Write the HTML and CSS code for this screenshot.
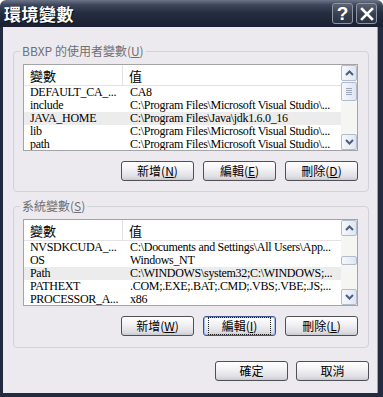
FILE: index.html
```html
<!DOCTYPE html>
<html lang="zh-Hant">
<head>
  <meta charset="UTF-8">
  <meta name="viewport" content="width=device-width, initial-scale=1.0">
  <title>環境變數</title>
  <link rel="stylesheet" href="styles.css">
</head>
<body>
  <div class="window">
    <!-- Title Bar -->
    <div class="titlebar">
      <span class="title">環境變數</span>
      <div class="caption-buttons">
        <span class="cap-btn help">?</span>
        <span class="cap-btn close">
          <svg width="14" height="14" viewBox="0 0 14 14">
            <path d="M2 2 L12 12 M12 2 L2 12" stroke="#fff" stroke-width="2.6" stroke-linecap="square"/>
          </svg>
        </span>
      </div>
    </div>

    <div class="client">
      <!-- User Variables -->
      <fieldset class="group">
        <legend>BBXP 的使用者變數(<u>U</u>)</legend>
        <div class="listview">
          <div class="lv-body">
            <div class="lv-head"><span class="col-name">變數</span><span class="col-value">值</span></div>
            <div class="lv-row"><span class="col-name">DEFAULT_CA_...</span><span class="col-value">CA8</span></div>
            <div class="lv-row"><span class="col-name">include</span><span class="col-value">C:\Program Files\Microsoft Visual Studio\...</span></div>
            <div class="lv-row selected"><span class="col-name">JAVA_HOME</span><span class="col-value">C:\Program Files\Java\jdk1.6.0_16</span></div>
            <div class="lv-row"><span class="col-name">lib</span><span class="col-value">C:\Program Files\Microsoft Visual Studio\...</span></div>
            <div class="lv-row"><span class="col-name">path</span><span class="col-value">C:\Program Files\Microsoft Visual Studio\...</span></div>
          </div>
          <div class="scrollbar">
            <span class="sb-btn">
              <svg width="9" height="6" viewBox="0 0 9 6"><path d="M1 5 L4.5 1.5 L8 5" fill="none" stroke="#4d5d7f" stroke-width="2"/></svg>
            </span>
            <div class="sb-track">
              <span class="sb-thumb" style="margin-top:1px;height:19px"><i></i><i></i><i></i><i></i></span>
            </div>
            <span class="sb-btn">
              <svg width="9" height="6" viewBox="0 0 9 6"><path d="M1 1 L4.5 4.5 L8 1" fill="none" stroke="#4d5d7f" stroke-width="2"/></svg>
            </span>
          </div>
        </div>
        <div class="buttons">
          <button class="btn">新增(<u>N</u>)</button>
          <button class="btn">編輯(<u>E</u>)</button>
          <button class="btn">刪除(<u>D</u>)</button>
        </div>
      </fieldset>

      <!-- System Variables -->
      <fieldset class="group system">
        <legend>系統變數(<u>S</u>)</legend>
        <div class="listview">
          <div class="lv-body">
            <div class="lv-head"><span class="col-name">變數</span><span class="col-value">值</span></div>
            <div class="lv-row"><span class="col-name">NVSDKCUDA_...</span><span class="col-value">C:\Documents and Settings\All Users\App...</span></div>
            <div class="lv-row"><span class="col-name">OS</span><span class="col-value">Windows_NT</span></div>
            <div class="lv-row selected"><span class="col-name">Path</span><span class="col-value">C:\WINDOWS\system32;C:\WINDOWS;...</span></div>
            <div class="lv-row"><span class="col-name">PATHEXT</span><span class="col-value">.COM;.EXE;.BAT;.CMD;.VBS;.VBE;.JS;...</span></div>
            <div class="lv-row"><span class="col-name">PROCESSOR_A...</span><span class="col-value">x86</span></div>
          </div>
          <div class="scrollbar">
            <span class="sb-btn">
              <svg width="9" height="6" viewBox="0 0 9 6"><path d="M1 5 L4.5 1.5 L8 5" fill="none" stroke="#4d5d7f" stroke-width="2"/></svg>
            </span>
            <div class="sb-track">
              <span class="sb-thumb" style="margin-top:20px;height:9px"></span>
            </div>
            <span class="sb-btn">
              <svg width="9" height="6" viewBox="0 0 9 6"><path d="M1 1 L4.5 4.5 L8 1" fill="none" stroke="#4d5d7f" stroke-width="2"/></svg>
            </span>
          </div>
        </div>
        <div class="buttons">
          <button class="btn">新增(<u>W</u>)</button>
          <button class="btn focused"><span class="focus-rect">編輯(<u>I</u>)</span></button>
          <button class="btn">刪除(<u>L</u>)</button>
        </div>
      </fieldset>

      <!-- Dialog Buttons -->
      <div class="dialog-buttons">
        <button class="btn">確定</button>
        <button class="btn">取消</button>
      </div>
    </div>
  </div>
</body>
</html>
```

FILE: styles.css
```css
/* General */
body {
  margin: 0;
  padding: 0;
  background: #fff;
  font-family: "Noto Sans CJK TC", "Liberation Sans", sans-serif;
}

.window {
  width: 383px;
  height: 397px;
  display: flex;
  flex-direction: column;
  box-sizing: border-box;
}

/* Title Bar */
.titlebar {
  height: 27px;
  flex: none;
  display: flex;
  align-items: center;
  justify-content: space-between;
  padding: 0 6px 0 4px;
  border-radius: 6px 6px 0 0;
  background: linear-gradient(#6c7588 0, #3c465b 5px, #252d40 13px, #1a2031 27px);
}

.title {
  color: #fff;
  font-size: 17px;
  font-weight: bold;
  line-height: 20px;
  letter-spacing: 0.5px;
  text-shadow: 1px 1px 0 #0b0f18;
}

.caption-buttons {
  display: flex;
  gap: 3px;
}

.cap-btn {
  width: 19px;
  height: 19px;
  display: flex;
  align-items: center;
  justify-content: center;
  border: 1px solid #8e95a3;
  border-radius: 3px;
  background: linear-gradient(#5b6373, #3a4152 50%, #2c3242);
  color: #fff;
  font-family: "Liberation Sans", sans-serif;
  font-weight: bold;
  font-size: 19px;
  line-height: 1;
}

/* Dialog body */
.client {
  flex: 1;
  display: flex;
  flex-direction: column;
  background: #eceaef;
  border-left: 3px solid #222b3f;
  border-right: 5px solid #222b3f;
  border-bottom: 4px solid #222b3f;
  box-shadow: inset -1px 0 0 #9aa0ad;
}

/* Group Boxes */
.group {
  margin: 17px 9px 0 10px;
  padding: 6px 10px 10px 9px;
  border: 1px solid #d3d2d8;
  border-radius: 4px;
  min-width: 0;
}

.group.system {
  margin-top: 7px;
  padding-bottom: 11px;
}

.group legend {
  padding: 0 2px;
  margin-left: -3px;
  font-size: 12px;
  line-height: 14px;
  color: #6f6f74;
}

/* List View */
.listview {
  height: 87px;
  box-sizing: border-box;
  display: flex;
  border: 1px solid #a3a3a8;
  background: #fff;
}

.lv-body {
  flex: 1;
  overflow: hidden;
}

.lv-head {
  height: 20px;
  display: flex;
  align-items: center;
  border-bottom: 1px solid #e3e3e6;
  font-size: 13px;
  color: #000;
}

.lv-head .col-name {
  align-self: stretch;
  display: flex;
  align-items: center;
  border-right: 1px solid #e3e3e6;
}

.lv-row {
  height: 13px;
  display: flex;
  font-family: "Liberation Serif", "Noto Sans CJK TC", serif;
  font-size: 12px;
  line-height: 13px;
  letter-spacing: -0.3px;
  color: #000;
  white-space: nowrap;
}

.lv-row.selected {
  background: #ececec;
}

.col-name {
  width: 99px;
  flex: none;
  padding-left: 6px;
  box-sizing: border-box;
  overflow: hidden;
}

.lv-row .col-name {
  width: 100px;
}

.col-value {
  flex: 1;
  padding-left: 6px;
  overflow: hidden;
}

/* Scrollbar */
.scrollbar {
  width: 16px;
  flex: none;
  display: flex;
  flex-direction: column;
  background: #f5f5f3;
}

.sb-btn,
.sb-thumb {
  box-sizing: border-box;
  border: 1px solid #b3bccd;
  border-radius: 2px;
  background: linear-gradient(90deg, #f7f8fc, #dfe5ef);
}

.sb-btn {
  height: 16px;
  display: flex;
  align-items: center;
  justify-content: center;
}

.sb-track {
  flex: 1;
  display: flex;
  flex-direction: column;
}

.sb-thumb {
  display: flex;
  flex-direction: column;
  align-items: center;
  justify-content: center;
  gap: 1px;
}

.sb-thumb i {
  width: 6px;
  height: 1px;
  background: #9aa6bb;
}

/* Buttons */
.buttons {
  display: flex;
  justify-content: flex-end;
  gap: 9px;
  margin-top: 10px;
}

.btn {
  width: 73px;
  height: 20px;
  padding: 0;
  box-sizing: border-box;
  border: 1px solid #4f4f55;
  border-radius: 3px;
  background: linear-gradient(#ffffff, #f0f0f3 45%, #dcdce2 85%, #c9c9d0);
  font-family: "Noto Sans CJK TC", sans-serif;
  font-size: 12px;
  line-height: 16px;
  color: #000;
}

.btn.focused {
  border-color: #3a5590;
  box-shadow: inset 0 0 0 1px #a8bde6;
}

.focus-rect {
  display: inline-block;
  padding: 0 13px;
  outline: 1px dotted #222;
  outline-offset: 0;
}

.dialog-buttons {
  display: flex;
  justify-content: flex-end;
  gap: 8px;
  margin: 13px 9px 0 0;
}
```
